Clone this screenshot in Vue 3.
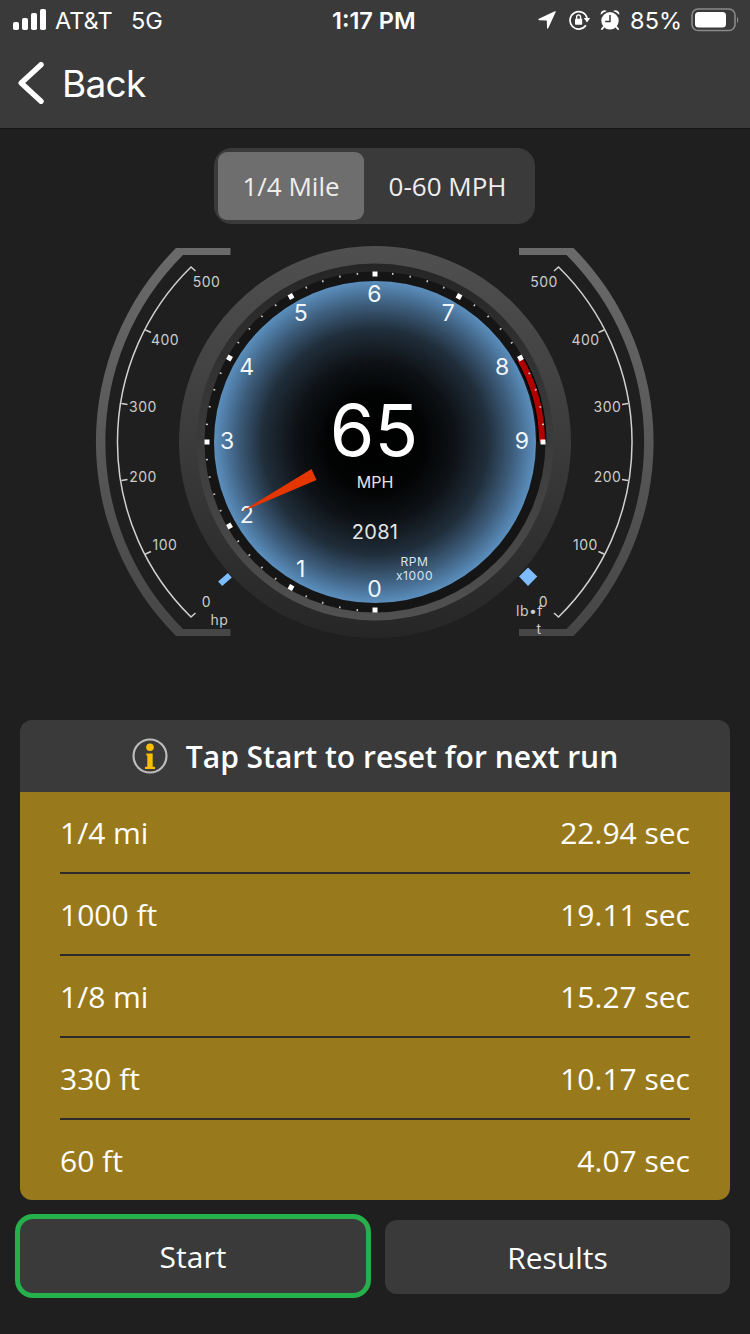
<script setup>
import { ref } from "vue";

const CX = 375;
const CY = 442;

const tabs = ["1/4 Mile", "0-60 MPH"];
const activeTab = ref(0);

const results = [
  { label: "1/4 mi", time: "22.94 sec" },
  { label: "1000 ft", time: "19.11 sec" },
  { label: "1/8 mi", time: "15.27 sec" },
  { label: "330 ft", time: "10.17 sec" },
  { label: "60 ft", time: "4.07 sec" },
];

// 0 is at the bottom, 30 degrees per 1000 rpm, clockwise
const polar = (deg, r) => {
  const rad = (deg * Math.PI) / 180;
  return { x: CX - r * Math.sin(rad), y: CY + r * Math.cos(rad) };
};

const numbers = Array.from({ length: 10 }, (_, n) => ({
  n,
  ...polar(n * 30, 147.5),
}));

const ticks = Array.from({ length: 46 }, (_, i) => ({
  deg: i * 6,
  major: i % 5 === 0,
}));

const hpLabels = [
  { text: "500", x: 206.5, y: 287 },
  { text: "400", x: 165, y: 345 },
  { text: "300", x: 143, y: 412 },
  { text: "200", x: 143, y: 482 },
  { text: "100", x: 165, y: 550 },
  { text: "0", x: 206.5, y: 607 },
  { text: "hp", x: 219.5, y: 624.5 },
];

const torqueLabels = [
  { text: "500", x: 544, y: 287 },
  { text: "400", x: 585.5, y: 345 },
  { text: "300", x: 607.5, y: 412 },
  { text: "200", x: 607.5, y: 482 },
  { text: "100", x: 585.5, y: 550 },
  { text: "0", x: 543.5, y: 607 },
  { text: "lb•f", x: 529.5, y: 616 },
  { text: "t", x: 539, y: 633.5 },
];
</script>

<template>
  <div class="app">
    <header class="header">
      <div class="status">
        <svg class="signal" width="34" height="22" viewBox="0 0 34 22">
          <rect x="0" y="13" width="6" height="8" rx="1.8" />
          <rect x="9" y="9" width="6" height="12" rx="1.8" />
          <rect x="18" y="4" width="6" height="17" rx="1.8" />
          <rect x="27" y="0" width="6" height="21" rx="1.8" />
        </svg>
        <span class="carrier">AT&amp;T</span>
        <span class="network">5G</span>
        <span class="clock">1:17 PM</span>
        <div class="status__right">
          <svg width="18" height="18" viewBox="0 0 18 18">
            <path
              d="M17.700.9 10.300 17.100Q9.400 18.600 9 16.900L8.800 9.500 1.200 9.200Q-.6 8.700.9 7.700L16.800.200Q18 0 17.700.9Z"
            />
          </svg>
          <svg class="lock" width="22" height="20" viewBox="0 0 22 20">
            <path
              d="M16.900 15.300A8.700 8.700 0 1 1 18.100 8"
              fill="none"
              stroke="#fff"
              stroke-width="1.700"
            />
            <path d="M14.800 8h6.400L18 12.600Z" />
            <rect x="6" y="8.700" width="7.200" height="6" rx=".8" />
            <path
              d="M7.600 9V7.200a2 2.300 0 0 1 4 0V9"
              fill="none"
              stroke="#fff"
              stroke-width="1.400"
            />
          </svg>
          <svg class="alarm" width="20" height="20" viewBox="0 0 20 20">
            <circle cx="10" cy="10.800" r="8.700" />
            <path
              d="M.9 4.700Q.2 2.500 2.200 1.100T6.900 1Q3.200 2 .9 4.700ZM19.100 4.700Q19.800 2.500 17.800 1.100T13.100 1Q16.800 2 19.100 4.700Z"
            />
            <path
              d="M3.600 17 2 19M16.400 17l1.600 2"
              stroke="#fff"
              stroke-width="2"
              stroke-linecap="round"
            />
            <path
              d="M10 5v6.500H5.200"
              fill="none"
              stroke="#3a3a3a"
              stroke-width="1.500"
            />
          </svg>
          <span class="percent">85%</span>
          <svg class="battery" width="49" height="24" viewBox="0 0 49 24">
            <rect
              x="1"
              y="1"
              width="43"
              height="21.500"
              rx="6"
              fill="none"
              stroke="#8a8a8a"
              stroke-width="1.600"
            />
            <rect x="4" y="4" width="31" height="15.500" rx="3.500" />
            <path d="M46 8.500q2.600 3.400 0 7Z" fill="#8a8a8a" />
          </svg>
        </div>
      </div>
      <a class="back">
        <svg width="26" height="42" viewBox="0 0 26 42">
          <path
            d="M23 2.700 3.200 21 23 39.300"
            fill="none"
            stroke="#fff"
            stroke-width="5.400"
            stroke-linecap="round"
            stroke-linejoin="round"
          />
        </svg>
        <span>Back</span>
      </a>
    </header>

    <div class="tabs">
      <div
        v-for="(tab, i) in tabs"
        :key="tab"
        class="tabs__item"
        :class="{ 'is-active': activeTab === i }"
        @click="activeTab = i"
      >
        {{ tab }}
      </div>
    </div>

    <svg class="gauge" width="750" height="496" viewBox="0 224 750 496">
      <defs>
        <radialGradient id="face">
          <stop offset="0" stop-color="#000" />
          <stop offset=".3" stop-color="#020303" />
          <stop offset=".5" stop-color="#0e1216" />
          <stop offset=".7" stop-color="#202e3b" />
          <stop offset=".85" stop-color="#3c5b79" />
          <stop offset="1" stop-color="#5b8fbe" />
        </radialGradient>
        <linearGradient id="bezel" x1="0" y1="0" x2="0" y2="1">
          <stop offset="0" stop-color="#505050" />
          <stop offset="1" stop-color="#262626" />
        </linearGradient>
        <linearGradient id="rim" x1="0" y1="0" x2="0" y2="1">
          <stop offset="0" stop-color="#252525" />
          <stop offset="1" stop-color="#515151" />
        </linearGradient>
        <linearGradient id="frame" x1="0" y1="0" x2="0" y2="1">
          <stop offset="0" stop-color="#6a6a6a" />
          <stop offset="1" stop-color="#464646" />
        </linearGradient>
        <!-- side bracket with its scale, mirrored for torque -->
        <g id="side">
          <path
            d="M230.500 248H176A275 275 0 0 0 176 636H230.500V629H183A264 264 0 0 1 183 255H230.500Z"
            fill="url(#frame)"
          />
          <path
            d="M195.500 271 191 267A245 245 0 0 0 191 617L195.500 613M145.500 330l5.500 2.500M121.500 403.500l6 1M121.500 480.500l6-1M145.500 554l5.500-2.500"
            fill="none"
            stroke="#d0d0d0"
            stroke-width="1.500"
          />
        </g>
      </defs>

      <use href="#side" />
      <use href="#side" transform="translate(749.500 0) scale(-1 1)" />

      <circle :cx="CX" :cy="CY" r="196" fill="url(#bezel)" />
      <circle :cx="CX" :cy="CY" r="178.500" fill="url(#rim)" />
      <circle :cx="CX" :cy="CY" r="170.500" fill="#151515" />
      <circle :cx="CX" :cy="CY" r="161" fill="url(#face)" />

      <!-- redline -->
      <path
        d="M519.600 358.500A167 167 0 0 1 542 442"
        fill="none"
        stroke="#000"
        stroke-width="9"
      />
      <path
        d="M519.600 358.500A167 167 0 0 1 542 442"
        fill="none"
        stroke="#b00000"
        stroke-width="6"
      />

      <g v-for="t in ticks" :key="t.deg" :transform="`rotate(${t.deg} ${CX} ${CY})`">
        <rect v-if="t.major" x="372.500" y="607.500" width="5" height="5" fill="#fff" />
        <rect v-else x="374.200" y="610" width="1.500" height="2" fill="#ccc" />
      </g>

      <g class="numbers">
        <text v-for="d in numbers" :key="d.n" :x="d.x - 0.5" :y="d.y + 7">{{ d.n }}</text>
      </g>

      <path d="M241 512 311.500 469 316.500 480Z" fill="#e63600" />

      <text class="speed" x="374" y="456">65</text>
      <text class="unit" x="375" y="487.500">MPH</text>
      <text class="rpm" x="375" y="538.500">2081</text>
      <text class="scale" x="414.500" y="565.500">RPM</text>
      <text class="scale" x="414.500" y="579.500">x1000</text>

      <rect
        x="218.500"
        y="576.500"
        width="13"
        height="6"
        fill="#7cbcff"
        transform="rotate(-42 225 579.500)"
      />
      <path d="M528 567.500 537.300 576.500 528 586 519 576.500Z" fill="#7cbcff" />

      <g class="labels">
        <text v-for="l in hpLabels" :key="l.text" :x="l.x" :y="l.y">{{ l.text }}</text>
        <text v-for="l in torqueLabels" :key="l.text" :x="l.x" :y="l.y">{{ l.text }}</text>
      </g>
    </svg>

    <section class="card">
      <div class="card__title">
        <svg width="36" height="36" viewBox="0 0 36 36">
          <circle cx="18" cy="18" r="16.500" fill="none" stroke="#bcbcbc" stroke-width="2.200" />
          <circle cx="18" cy="9.300" r="3.800" fill="#fbbf00" />
          <path
            d="M14.300 15.500h6.400V28.700h2.300V31H13V28.700h2.300V17.500h-1Z"
            fill="#fbbf00"
          />
        </svg>
        <span>Tap Start to reset for next run</span>
      </div>
      <div class="card__body">
        <div v-for="row in results" :key="row.label" class="row">
          <span>{{ row.label }}</span>
          <span>{{ row.time }}</span>
        </div>
      </div>
    </section>

    <div class="actions">
      <div class="btn is-start">Start</div>
      <div class="btn">Results</div>
    </div>
  </div>
</template>

<style>
body {
  background: #1f1f1f;
}
</style>

<style scoped>
.app {
  width: 750px;
  height: 1334px;
  overflow: hidden;
  display: flex;
  flex-direction: column;
  background: #1f1f1f;
  color: #fff;
  font-family: "Open Sans", "Noto Sans", sans-serif;
}

/* ヘッダー */
.header {
  height: 129px;
  box-sizing: border-box;
  border-bottom: 1px solid #151515;
  background: #3a3a3a;
  font-family: Inter, sans-serif;
}
.status {
  display: grid;
  grid-template-columns: 34px 76px 60px 1fr auto;
  align-items: center;
  height: 40px;
  padding: 0 10px 0 13px;
  font-size: 23.5px;
  fill: #fff;
}
.carrier {
  padding-left: 8px;
}
.network {
  padding-left: 8px;
}
.clock {
  padding-left: 149px;
  font-weight: 600;
  font-size: 23.5px;
  white-space: nowrap;
}
.status__right {
  display: flex;
  align-items: center;
}
.lock {
  margin-left: 13px;
}
.alarm {
  margin-left: 9px;
}
.percent {
  margin-left: 10px;
}
.battery {
  margin-left: 9px;
}
.back {
  display: flex;
  align-items: center;
  gap: 18px;
  height: 86px;
  padding-left: 18px;
  font-size: 37px;
  letter-spacing: -0.7px;
}

/* 切り替えタブ */
.tabs {
  display: flex;
  align-self: flex-start;
  width: 321px;
  height: 76px;
  margin: 19px 0 0 214px;
  padding: 4px;
  box-sizing: border-box;
  border-radius: 18px;
  background: #3a3a3a;
  font-size: 26px;
  color: #eee;
}
.tabs__item {
  flex: 1;
  display: flex;
  align-items: center;
  justify-content: center;
  border-radius: 9px;
  white-space: nowrap;
}
.tabs__item.is-active {
  flex: none;
  width: 146px;
  box-sizing: border-box;
  background: #6e6e6e;
}

/* メーター */
.gauge {
  display: block;
  flex: none;
  font-family: Inter, sans-serif;
  text-anchor: middle;
  fill: #fff;
}
.numbers {
  font-size: 23px;
  fill: #f2f6fa;
}
.speed {
  font-size: 72px;
}
.unit {
  font-size: 16px;
  fill: #e4e4e4;
}
.rpm {
  font-size: 20px;
  letter-spacing: 0.3px;
  fill: #e4e4e4;
}
.scale {
  font-size: 12px;
  letter-spacing: 0.6px;
  fill: #dde3ea;
}
.labels {
  font-size: 14px;
  letter-spacing: 0.5px;
  fill: #ccc;
}

/* 計測結果 */
.card {
  margin: 0 20px;
  border-radius: 12px;
  overflow: hidden;
  flex: none;
}
.card__title {
  display: flex;
  align-items: center;
  justify-content: center;
  gap: 18px;
  height: 72px;
  background: #3a3a3a;
  font-size: 30px;
  font-weight: 600;
}
.card__body {
  padding: 0 40px;
  background: #987a1c;
}
.row {
  display: flex;
  align-items: center;
  justify-content: space-between;
  height: 82px;
  box-sizing: border-box;
  border-bottom: 2px solid #2c2c2c;
  font-size: 30px;
}
.row:last-child {
  height: 80px;
  border-bottom: 0;
}

/* ボタン */
.actions {
  display: flex;
  justify-content: space-between;
  padding: 14px 20px 0 15px;
}
.btn {
  display: flex;
  align-items: center;
  justify-content: center;
  width: 345px;
  height: 74px;
  margin-top: 6px;
  border-radius: 12px;
  background: #3a3a3a;
  font-size: 30px;
}
.btn.is-start {
  width: 346px;
  margin-top: 0;
  border: 5px solid #25b04c;
  border-radius: 18px;
}
</style>
